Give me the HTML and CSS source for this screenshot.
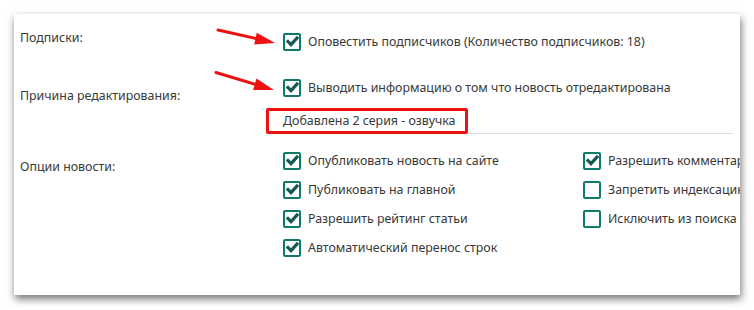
FILE: index.html
```html
<!DOCTYPE html>
<html lang="ru">

<head>
  <meta charset="UTF-8">
  <title>Редактирование новости</title>
  <link rel="stylesheet" href="styles.css">
</head>

<body>
  <main class="panel">
    <!-- Подписки -->
    <div class="form-row row-subs">
      <div class="label">Подписки:</div>
      <div class="control">
        <label class="check">
          <span class="box on"><svg viewBox="0 0 13 13"><path d="M2 6.6 L5 9.6 L11 3"/></svg></span>
          Оповестить подписчиков (Количество подписчиков: 18)
        </label>
      </div>
    </div>

    <!-- Причина редактирования -->
    <div class="form-row row-reason">
      <div class="label">Причина редактирования:</div>
      <div class="control">
        <label class="check">
          <span class="box on"><svg viewBox="0 0 13 13"><path d="M2 6.6 L5 9.6 L11 3"/></svg></span>
          Выводить информацию о том что новость отредактирована
        </label>
        <div class="input">
          <span class="marked">Добавлена 2 серия - озвучка</span>
        </div>
      </div>
    </div>

    <!-- Опции новости -->
    <div class="form-row row-options">
      <div class="label">Опции новости:</div>
      <div class="control options">
        <label class="check">
          <span class="box on"><svg viewBox="0 0 13 13"><path d="M2 6.6 L5 9.6 L11 3"/></svg></span>
          Опубликовать новость на сайте
        </label>
        <label class="check">
          <span class="box on"><svg viewBox="0 0 13 13"><path d="M2 6.6 L5 9.6 L11 3"/></svg></span>
          Разрешить комментарии
        </label>
        <label class="check">
          <span class="box on"><svg viewBox="0 0 13 13"><path d="M2 6.6 L5 9.6 L11 3"/></svg></span>
          Публиковать на главной
        </label>
        <label class="check">
          <span class="box"></span>
          Запретить индексацию страницы
        </label>
        <label class="check">
          <span class="box on"><svg viewBox="0 0 13 13"><path d="M2 6.6 L5 9.6 L11 3"/></svg></span>
          Разрешить рейтинг статьи
        </label>
        <label class="check">
          <span class="box"></span>
          Исключить из поиска по сайту
        </label>
        <label class="check">
          <span class="box on"><svg viewBox="0 0 13 13"><path d="M2 6.6 L5 9.6 L11 3"/></svg></span>
          Автоматический перенос строк
        </label>
      </div>
    </div>
  </main>

  <!-- annotation arrows -->
  <svg class="arrows" width="754" height="310" viewBox="0 0 754 310">
    <line x1="218" y1="30" x2="257" y2="38.8" />
    <polygon points="275,43 254.2,44.4 256.8,32.7" />
    <line x1="216" y1="72.5" x2="256" y2="84.5" />
    <polygon points="274,90 253.1,90.1 256.5,78.6" />
  </svg>
</body>

</html>
```

FILE: styles.css
```css
* {
  box-sizing: border-box;
  margin: 0;
  padding: 0;
}

body {
  background: #fff;
  font-family: 'Noto Sans', 'Open Sans', sans-serif;
  font-size: 12.4px;
  color: #383838;
  position: relative;
  width: 754px;
  height: 310px;
  overflow: hidden;
}

/* white card with the drop shadow */
.panel {
  margin: 14px 0 0 14px;
  width: 726px;
  height: 281px;
  background: #fff;
  overflow: hidden;
  box-shadow: 1px 4px 8px rgba(0, 0, 0, 0.55);
}

.form-row {
  display: grid;
  grid-template-columns: 251px 1fr;
}

.label {
  padding-left: 6px;
  line-height: 20px;
  white-space: nowrap;
}

.control {
  min-width: 0;
}

.row-subs {
  padding-top: 13px;
}

.row-subs .label {
  padding-top: 1px;
}

.row-reason {
  margin-top: 17px;
}

.row-reason .label {
  padding-top: 13px;
}

.row-options {
  margin-top: 12px;
}

.row-options .label {
  padding-top: 11px;
}

/* checkbox rows */
.check {
  display: flex;
  align-items: center;
  gap: 7px;
  height: 29px;
  padding-left: 18px;
  white-space: nowrap;
}

.box {
  flex: none;
  width: 18px;
  height: 18px;
  border: 2px solid #0e7a69;
  border-radius: 2px;
  background: #fff;
  display: flex;
  align-items: center;
  justify-content: center;
}

.box svg {
  width: 13px;
  height: 13px;
}

.box path {
  fill: none;
  stroke: #145a52;
  stroke-width: 3.2;
  stroke-linecap: square;
}

.options {
  display: grid;
  grid-template-columns: 300px 1fr;
}

/* text input with the reason */
.input {
  margin-top: 6px;
  height: 26px;
  border-bottom: 1px solid #dcdcdc;
  margin-right: 7px;
}

.marked {
  display: inline-block;
  margin-left: 1px;
  height: 26px;
  line-height: 20px;
  padding: 0 9px 0 14px;
  border: 3px solid #ee1111;
  border-radius: 2px;
  white-space: nowrap;
}

.arrows {
  position: absolute;
  left: 0;
  top: 0;
  pointer-events: none;
}

.arrows line {
  stroke: #ee1111;
  stroke-width: 3;
  stroke-linecap: round;
}

.arrows polygon {
  fill: #ee1111;
}
```
